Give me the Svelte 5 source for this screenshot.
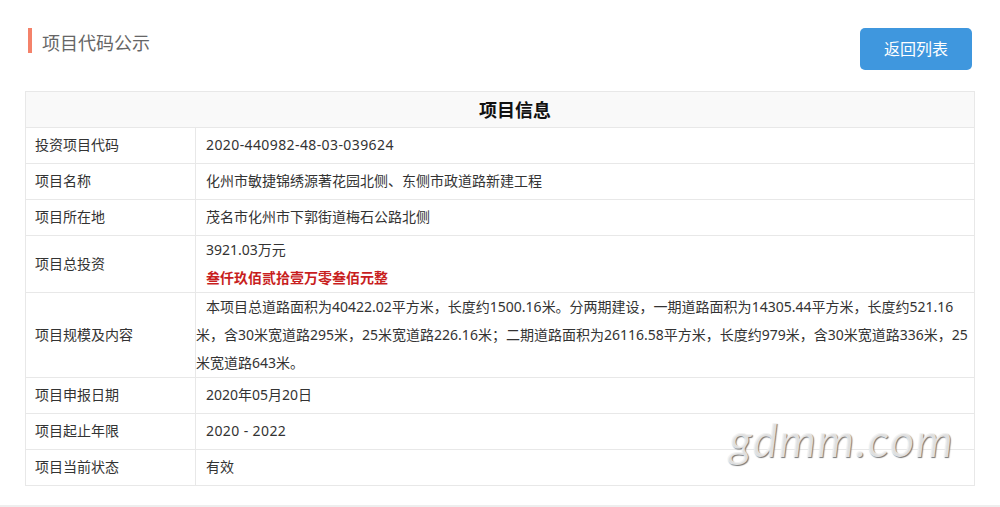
<script>
  const rows = [
    { label: '投资项目代码', value: '2020-440982-48-03-039624' },
    { label: '项目名称', value: '化州市敏捷锦绣源著花园北侧、东侧市政道路新建工程' },
    { label: '项目所在地', value: '茂名市化州市下郭街道梅石公路北侧' }
  ];
  const tail = [
    { label: '项目申报日期', value: '2020年05月20日' },
    { label: '项目起止年限', value: '2020 - 2022' },
    { label: '项目当前状态', value: '有效' }
  ];
  const desc = '本项目总道路面积为40422.02平方米，长度约1500.16米。分两期建设，一期道路面积为14305.44平方米，长度约521.16米，含30米宽道路295米，25米宽道路226.16米；二期道路面积为26116.58平方米，长度约979米，含30米宽道路336米，25米宽道路643米。';

  // digits are wider than the CJK font's own, so they get their own span
  function runs(text) {
    return text.split(/([0-9.\- ]+)/);
  }
</script>

{#snippet mixed(text)}
  {#each runs(text) as part, i}{#if i % 2}<span class="num" class:dashed={part.includes('-')}>{part}</span>{:else}{part}{/if}{/each}
{/snippet}

<main class="page">
  <div class="head">
    <h2 class="title">项目代码公示</h2>
    <button class="back">返回列表</button>
  </div>

  <table class="info">
    <colgroup>
      <col class="col-label" />
      <col />
    </colgroup>
    <thead>
      <tr><th colspan="2">项目信息</th></tr>
    </thead>
    <tbody>
      {#each rows as row}
        <tr>
          <td class="label">{row.label}</td>
          <td class="value">{@render mixed(row.value)}</td>
        </tr>
      {/each}
      <tr>
        <td class="label low">项目总投资</td>
        <td class="value tall">
          <div class="lines">
            <div>{@render mixed('3921.03万元')}</div>
            <div class="amount">叁仟玖佰贰拾壹万零叁佰元整</div>
          </div>
        </td>
      </tr>
      <tr>
        <td class="label low">项目规模及内容</td>
        <td class="tall"><div class="lines desc">{@render mixed(desc)}</div></td>
      </tr>
      {#each tail as row}
        <tr>
          <td class="label">{row.label}</td>
          <td class="value">{@render mixed(row.value)}</td>
        </tr>
      {/each}
    </tbody>
  </table>

  <div class="footline"></div>
  <div class="watermark">gdmm.com</div>
</main>

<style>
  :global(body) {
    margin: 0;
    background: #fff;
  }
  .page {
    position: relative;
    height: 507px;
    overflow: hidden;
    padding: 28px 25px 0;
    box-sizing: border-box;
    font-family: "Noto Sans CJK SC", sans-serif;
    font-size: 14px;
    color: #333;
  }
  .head {
    display: flex;
    justify-content: space-between;
    align-items: flex-start;
    height: 63px;
    padding: 0 3px;
  }
  .title {
    margin: 0;
    height: 25px;
    line-height: 29px;
    padding-left: 10px;
    border-left: 4px solid #f4826a;
    font-size: 18px;
    font-weight: 400;
    color: #666;
  }
  .back {
    width: 112px;
    height: 42px;
    border: none;
    border-radius: 5px;
    background: #3f97de;
    color: #fff;
    font-family: inherit;
    font-size: 16px;
    padding: 0 0 2px;
  }
  .info {
    width: 950px;
    border-collapse: collapse;
    table-layout: fixed;
  }
  .col-label {
    width: 170px;
  }
  th {
    height: 33px;
    padding: 0 0 2px 30px;
    background: #f9f9f9;
    border: 1px solid #e8e8e8;
    font-size: 18px;
    font-weight: 700;
    color: #111;
  }
  td {
    height: 31px;
    padding: 0 0 4px;
    border: 1px solid #e8e8e8;
  }
  .label {
    padding-left: 9px;
  }
  .low {
    padding-bottom: 2px;
  }
  .value {
    padding-left: 10px;
  }
  .tall {
    padding-bottom: 0;
    line-height: 28px;
  }
  .lines {
    margin: -1px 0 1px;
  }
  .amount {
    color: #c81e1e;
    font-weight: 700;
  }
  .desc {
    text-indent: 10px;
  }
  .num {
    font-family: "Noto Sans", sans-serif;
    line-height: 1;
  }
  .dashed {
    letter-spacing: 0.4px;
  }
  .footline {
    position: absolute;
    left: 0;
    right: 0;
    top: 505px;
    height: 2px;
    background: #eee;
  }
  .watermark {
    position: absolute;
    left: 729px;
    top: 411px;
    font-family: Lato, sans-serif;
    font-size: 47px;
    font-style: italic;
    font-weight: 400;
    letter-spacing: 1.3px;
    color: rgba(243, 243, 243, 0.85);
    text-shadow: 1px 1px 1px #777;
  }
</style>
